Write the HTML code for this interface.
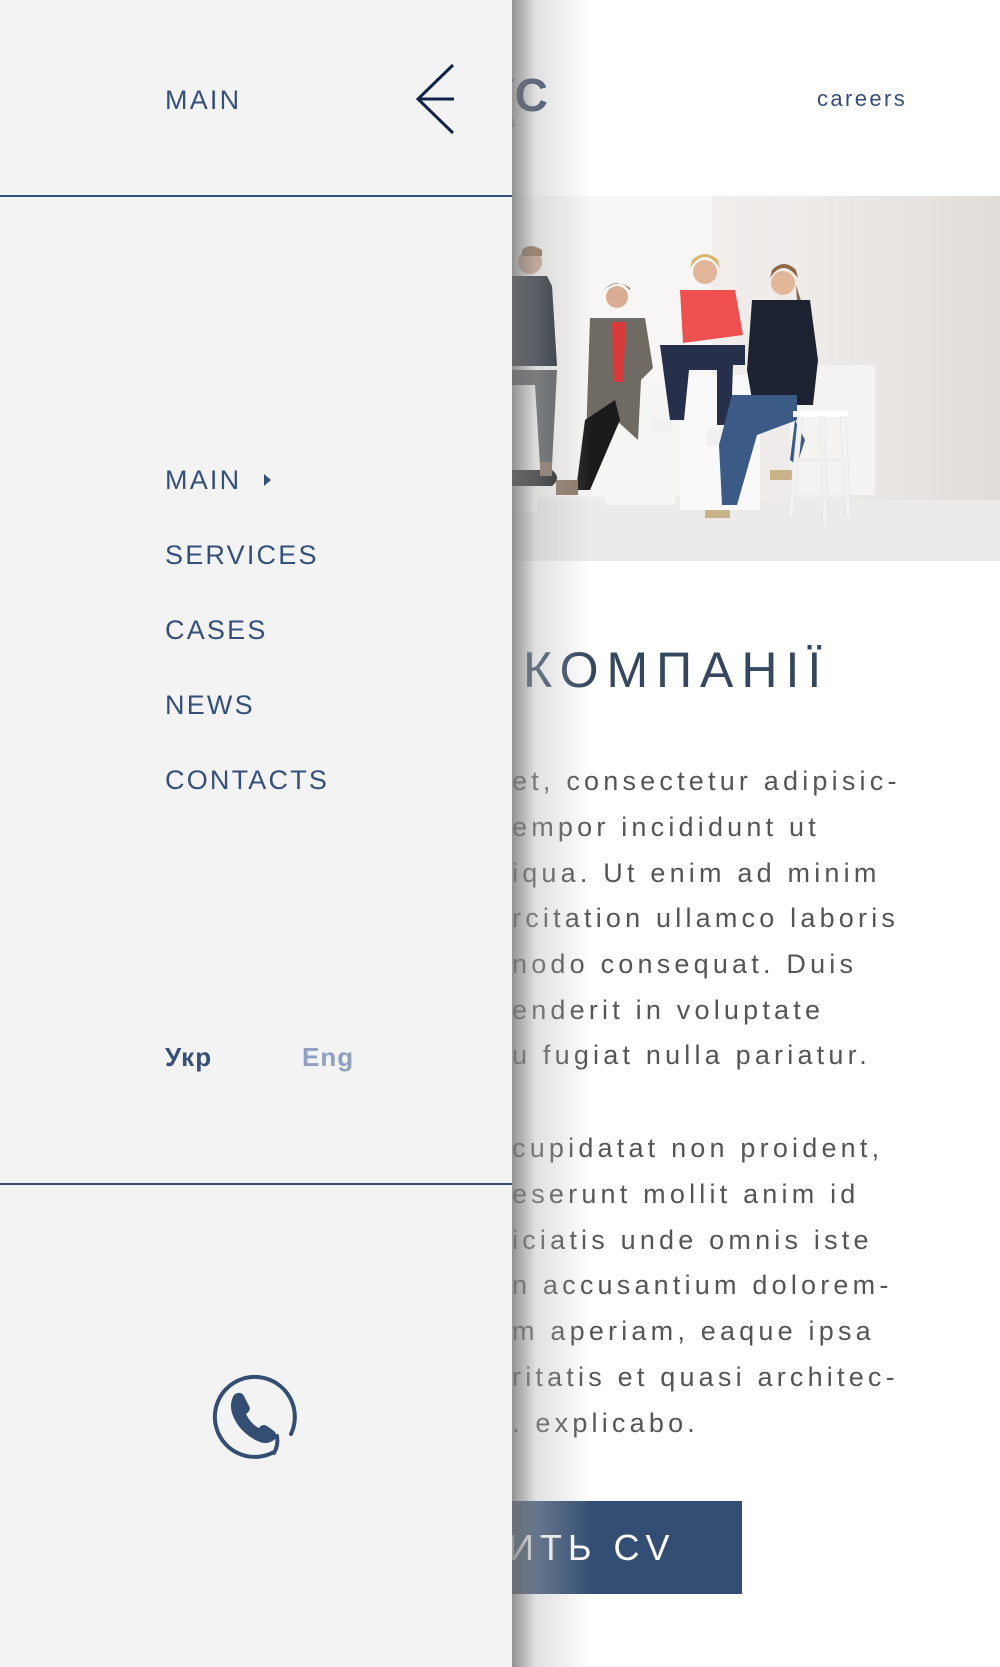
<!DOCTYPE html>
<html><head><meta charset="utf-8"><style>
*{margin:0;padding:0;box-sizing:border-box}
html,body{width:1000px;height:1667px;overflow:hidden;background:#fff;font-family:"Liberation Sans","Noto Sans CJK SC",sans-serif}
.abs{position:absolute}
#panel{position:absolute;left:0;top:0;width:512px;height:1667px;background:#f3f3f3;z-index:5}
#shadow{position:absolute;left:512px;top:0;width:80px;height:1667px;z-index:4;background:linear-gradient(to right,rgba(120,120,120,.8),rgba(180,180,180,.4) 30%,rgba(255,255,255,0) 100%)}
.menu{position:absolute;left:165px;font-size:27px;letter-spacing:2.2px;color:#34507a;line-height:1}
.body{position:absolute;left:512px;font-size:27px;letter-spacing:4.2px;color:#555;white-space:nowrap;line-height:1}
</style></head><body>

<div class="abs" style="left:484px;top:72px;font-size:46px;font-weight:bold;color:#263a5c;line-height:1">YC</div>
<div class="abs" style="left:486px;top:118px;font-size:11px;color:#666;letter-spacing:1px">TING</div>
<div class="abs" style="left:817px;top:86px;font-size:22px;letter-spacing:2.4px;color:#34507a">careers</div>

<svg class="abs" style="left:512px;top:196px" width="488" height="365" viewBox="512 196 488 365">
<defs><linearGradient id="bg" x1="0" x2="1"><stop offset="0" stop-color="#f4f2f1"/><stop offset=".6" stop-color="#eeebe9"/><stop offset="1" stop-color="#e2dcd8"/></linearGradient></defs>
<rect x="512" y="196" width="488" height="365" fill="url(#bg)"/>
<rect x="512" y="196" width="200" height="300" fill="#f7f6f5"/>
<rect x="512" y="500" width="488" height="61" fill="#ecebea"/>
<rect x="512" y="402" width="25" height="110" fill="#f8f8f8"/>
<rect x="605" y="390" width="70" height="115" fill="#f5f5f4"/>
<rect x="680" y="375" width="80" height="135" fill="#f9f9f9"/>
<rect x="790" y="365" width="85" height="130" fill="#f4f3f2"/>
<circle cx="530" cy="262" r="12" fill="#c9a08a"/>
<path d="M522 250 q8 -8 20 0 v6 h-20z" fill="#8a6a45"/>
<path d="M512 276 h35 l5 10 l5 80 h-45z" fill="#1e2630"/>
<path d="M512 370 h45 l-5 95 h-12 l-5 -80 h-23z" fill="#55575a"/>
<path d="M512 470 h40 q10 8 0 16 h-40z" fill="#1d1d1d"/>
<path d="M540 462 h12 v14 h-12z" fill="#827060"/>
<circle cx="617" cy="297" r="11" fill="#d8ad94"/>
<path d="M604 290 q13 -14 26 0 v-2 q-13 -10 -26 2z" fill="#8a6a45"/>
<path d="M590 318 h55 l8 50 l-12 12 l-3 60 l-22 -20 l-12 30 l-18 -10z" fill="#6f6a64"/>
<path d="M612 322 h14 l-3 60 h-10z" fill="#d63a3a"/>
<path d="M585 420 l30 -20 l5 20 l-30 70 h-14z" fill="#1b1b1b"/>
<path d="M556 480 h22 v15 h-22z" fill="#8c7866"/>
<circle cx="705" cy="272" r="12" fill="#e0b69a"/>
<path d="M690 268 q15 -22 30 0 l-2 -8 q-13 -12 -26 0z" fill="#d8b56a"/>
<path d="M680 290 h55 l8 45 l-60 8z" fill="#ee4f4f"/>
<path d="M660 345 h85 v20 l-12 0 l-2 60 h-14 l0 -55 l-28 0 l-5 50 h-14z" fill="#26304a"/>
<path d="M652 420 h20 v12 h-20z M707 428 h16 v18 h-16z" fill="#f0f0f0"/>
<circle cx="783" cy="283" r="12" fill="#e2b698"/>
<path d="M770 278 q13 -20 28 0 l-2 -8 q-12 -12 -24 0z M796 285 l8 25 l-6 8z" fill="#8c6845"/>
<path d="M752 300 h58 l8 60 l-5 45 h-60 l-6 -35z" fill="#1c2230"/>
<path d="M732 395 h65 v25 l-40 15 l-20 70 h-15 l-3 -60z" fill="#3b5a85"/>
<path d="M790 460 l5 -40 l10 20 l-8 25z" fill="#3b5a85"/>
<path d="M705 510 h25 v8 h-25z M770 470 h22 v10 h-22z" fill="#c9b48a"/>
<path d="M793 411 h55 v6 h-55z" fill="#fff"/>
<path d="M798 417 l-10 100 h5 l10 -100z M840 417 l6 100 h5 l-5 -100z M820 417 l3 110 h5 l-3 -110z" fill="#f2f2f2" stroke="#ddd" stroke-width=".5"/>
<path d="M795 458 h50 v4 h-50z M792 495 h58 v4 h-58z" fill="#eee"/>
</svg>

<div class="abs" style="left:523px;top:645px;font-size:50px;letter-spacing:8px;color:#34475f;line-height:1">КОМПАНІЇ</div>

<div class="body" style="top:768px">et, consectetur adipisic-</div>
<div class="body" style="top:814px">empor incididunt ut</div>
<div class="body" style="top:860px">iqua. Ut enim ad minim</div>
<div class="body" style="top:905px">rcitation ullamco laboris</div>
<div class="body" style="top:951px">nodo consequat. Duis</div>
<div class="body" style="top:997px">enderit in voluptate</div>
<div class="body" style="top:1042px">u fugiat nulla pariatur.</div>
<div class="body" style="top:1135px">cupidatat non proident,</div>
<div class="body" style="top:1181px">eserunt mollit anim id</div>
<div class="body" style="top:1227px">iciatis unde omnis iste</div>
<div class="body" style="top:1272px">n accusantium dolorem-</div>
<div class="body" style="top:1318px">m aperiam, eaque ipsa</div>
<div class="body" style="top:1364px">ritatis et quasi architec-</div>
<div class="body" style="top:1410px">. explicabo.</div>

<div class="abs" style="left:460px;top:1501px;width:282px;height:93px;background:#344e73"></div>
<div class="abs" style="left:508px;top:1530px;font-size:36px;letter-spacing:6px;color:#fff;line-height:1">ИТЬ CV</div>

<div id="shadow"></div>

<div id="panel">
  <div class="menu" style="top:87px">MAIN</div>
  <svg class="abs" style="left:410px;top:60px" width="52" height="80" viewBox="410 60 52 80">
    <path d="M453 65 L418 99 L453 133 M418 99 H454" fill="none" stroke="#0f2446" stroke-width="3"/>
  </svg>
  <div class="abs" style="left:0;top:195px;width:512px;height:1.5px;background:#34507a"></div>

  <div class="menu" style="top:467px">MAIN</div>
  <svg class="abs" style="left:264px;top:474px" width="8" height="12"><path d="M0 0 L7 6 L0 12Z" fill="#34507a"/></svg>
  <div class="menu" style="top:542px">SERVICES</div>
  <div class="menu" style="top:617px">CASES</div>
  <div class="menu" style="top:692px">NEWS</div>
  <div class="menu" style="top:767px">CONTACTS</div>

  <div class="abs" style="left:165px;top:1042px;font-size:26px;font-weight:bold;color:#34507a;letter-spacing:1px">Укр</div>
  <div class="abs" style="left:302px;top:1042px;font-size:26px;font-weight:bold;color:#8fa1bf;letter-spacing:1px">Eng</div>

  <div class="abs" style="left:0;top:1183px;width:512px;height:1.5px;background:#34507a"></div>

  <svg class="abs" style="left:205px;top:1370px" width="100" height="100" viewBox="205 1370 100 100">
    <path d="M291 1434 A40 40 0 1 0 274 1452" fill="none" stroke="#344e73" stroke-width="4" stroke-linecap="round"/>
    <path d="M234 1395 c3 -3 8 -3 10 1 l5 10 c2 3 0 6 -3 8 c3 6 7 11 13 14 c2 -3 5 -4 8 -2 l7 5 c3 3 3 7 0 9 c-4 3 -9 4 -14 2 c-13 -5 -24 -16 -28 -29 c-2 -7 -1 -13 2 -18z" fill="#344e73"/>
    <path d="M277 1436 c1 6 0 12 -3 17" fill="none" stroke="#344e73" stroke-width="4" stroke-linecap="round"/>
  </svg>
</div>
</body></html>
